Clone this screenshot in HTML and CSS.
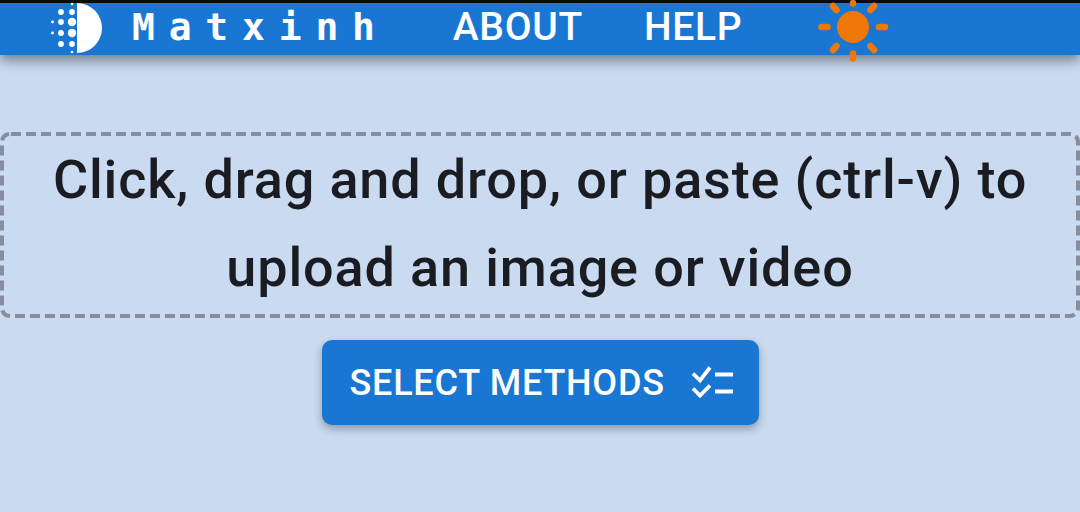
FILE: index.html
```html
<!DOCTYPE html>
<html lang="en">

<head>
    <meta charset="UTF-8">
    <meta name="viewport" content="width=device-width, initial-scale=1.0">
    <title>Matxinh</title>

    <link rel="stylesheet" href="styles.css">
</head>

<body>
    <header>
        <a href="#" class="logo" aria-label="Matxinh logo">
            <svg width="52" height="52" viewBox="0 0 52 52">
                <path d="M26 0a25 25 0 0 1 0 50z" fill="#fff" />
                <g fill="#fff">
                    <circle cx="21" cy="1" r="1.3" />
                    <circle cx="21" cy="9" r="2.9" />
                    <circle cx="21" cy="19" r="4.2" />
                    <circle cx="21" cy="30" r="4.2" />
                    <circle cx="21" cy="41" r="2.9" />
                    <circle cx="21" cy="49" r="1.3" />
                    <circle cx="10" cy="9" r="2.9" />
                    <circle cx="10" cy="19" r="2.9" />
                    <circle cx="10" cy="30" r="2.9" />
                    <circle cx="10" cy="41" r="2.9" />
                    <circle cx="1.5" cy="19" r="1.4" />
                    <circle cx="1.5" cy="30" r="1.4" />
                </g>
            </svg>
        </a>
        <a href="#" class="brand">Matxinh</a>
        <nav>
            <a href="#">ABOUT</a>
            <a href="#">HELP</a>
        </nav>
        <button class="theme" aria-label="Toggle theme">
            <svg width="72" height="60" viewBox="0 0 72 60">
                <circle cx="36" cy="24" r="16" fill="#ef7708" />
                <g stroke="#ef7708" stroke-width="6.5" stroke-linecap="round">
                    <path d="M4.5 24h6M62 24h6" />
                    <path d="M36 50.5v5" />
                    <path d="M36 0v.5" />
                    <path d="M16 47l3.5-4M53.5 43l3.5 4" />
                    <path d="M16 3l3.5 4M53.5 7l3.5-4" />
                </g>
            </svg>
        </button>
    </header>

    <main>
        <section class="dropzone">
            <svg class="dashes" aria-hidden="true">
                <rect class="dash-rect" x="2" y="2" rx="8" ry="8" />
            </svg>
            <p>Click, drag and drop, or paste (ctrl-v) to upload an image or video</p>
        </section>
        <button class="methods">
            <span>SELECT METHODS</span>
            <svg width="44" height="36" viewBox="0 0 44 36">
                <g fill="none" stroke="#fff" stroke-width="3.8">
                    <path d="M4 8.5l7 7 10-13" />
                    <path d="M4 23.5l7 7 10-10" />
                    <path d="M26 9.5h18M26 26.5h18" />
                </g>
            </svg>
        </button>
    </main>
</body>

</html>
```

FILE: styles.css
```css
* {
    padding: 0;
    margin: 0;
    box-sizing: border-box;
    font-family: Roboto, "Liberation Sans", sans-serif;
}

a {
    text-decoration: none;
    color: white;
}

body {
    background-color: #c9daf1;
    height: 512px;
    overflow: hidden;
}

header {
    height: 55px;
    border-top: 3px solid #0a0a0a;
    background-color: #1976d2;
    box-shadow: rgba(0, 0, 0, 0.45) 0px 5px 12px;
    display: flex;
    align-items: center;
    padding-left: 51px;
    padding-bottom: 5px;
}

.logo {
    display: block;
    align-self: flex-start;
    height: 52px;
}

.logo svg {
    overflow: visible;
    display: block;
}

.brand {
    margin-left: 29px;
    font-family: "DejaVu Sans Mono", monospace;
    font-size: 38px;
    font-weight: bold;
    letter-spacing: 13.8px;
}

nav {
    display: flex;
    gap: 61px;
    margin-left: 64px;
}

nav a {
    font-size: 39px;
    font-weight: 500;
    letter-spacing: 0.7px;
}

.theme {
    margin-left: 75px;
    border: none;
    background: none;
    display: block;
    align-self: flex-start;
    height: 52px;
}

.theme svg {
    overflow: visible;
    display: block;
}

main {
    display: flex;
    flex-direction: column;
    align-items: center;
    padding-top: 77px;
}

.dropzone {
    position: relative;
    width: 100%;
    height: 186px;
    padding: 4px 40px;
}

.dashes {
    position: absolute;
    top: 0;
    left: 0;
    width: 100%;
    height: 100%;
}

.dash-rect {
    width: calc(100% - 4px);
    height: calc(100% - 4px);
    fill: none;
    stroke: #868e9e;
    stroke-width: 4px;
    stroke-dasharray: 10 5;
    stroke-dashoffset: -1;
}

.dropzone p {
    font-size: 54px;
    font-weight: 500;
    letter-spacing: 0.85px;
    line-height: 88px;
    text-align: center;
    color: #1a1c22;
}

.methods {
    margin-top: 22px;
    width: 437px;
    height: 85px;
    border: none;
    border-radius: 10px;
    background-color: #1976d2;
    color: white;
    box-shadow: rgba(0, 0, 0, 0.3) 0px 4px 8px;
    display: flex;
    align-items: center;
    justify-content: space-between;
    padding: 0 26px 0 28px;
}

.methods span {
    font-size: 36px;
    font-weight: 500;
    letter-spacing: 0.75px;
}
```
